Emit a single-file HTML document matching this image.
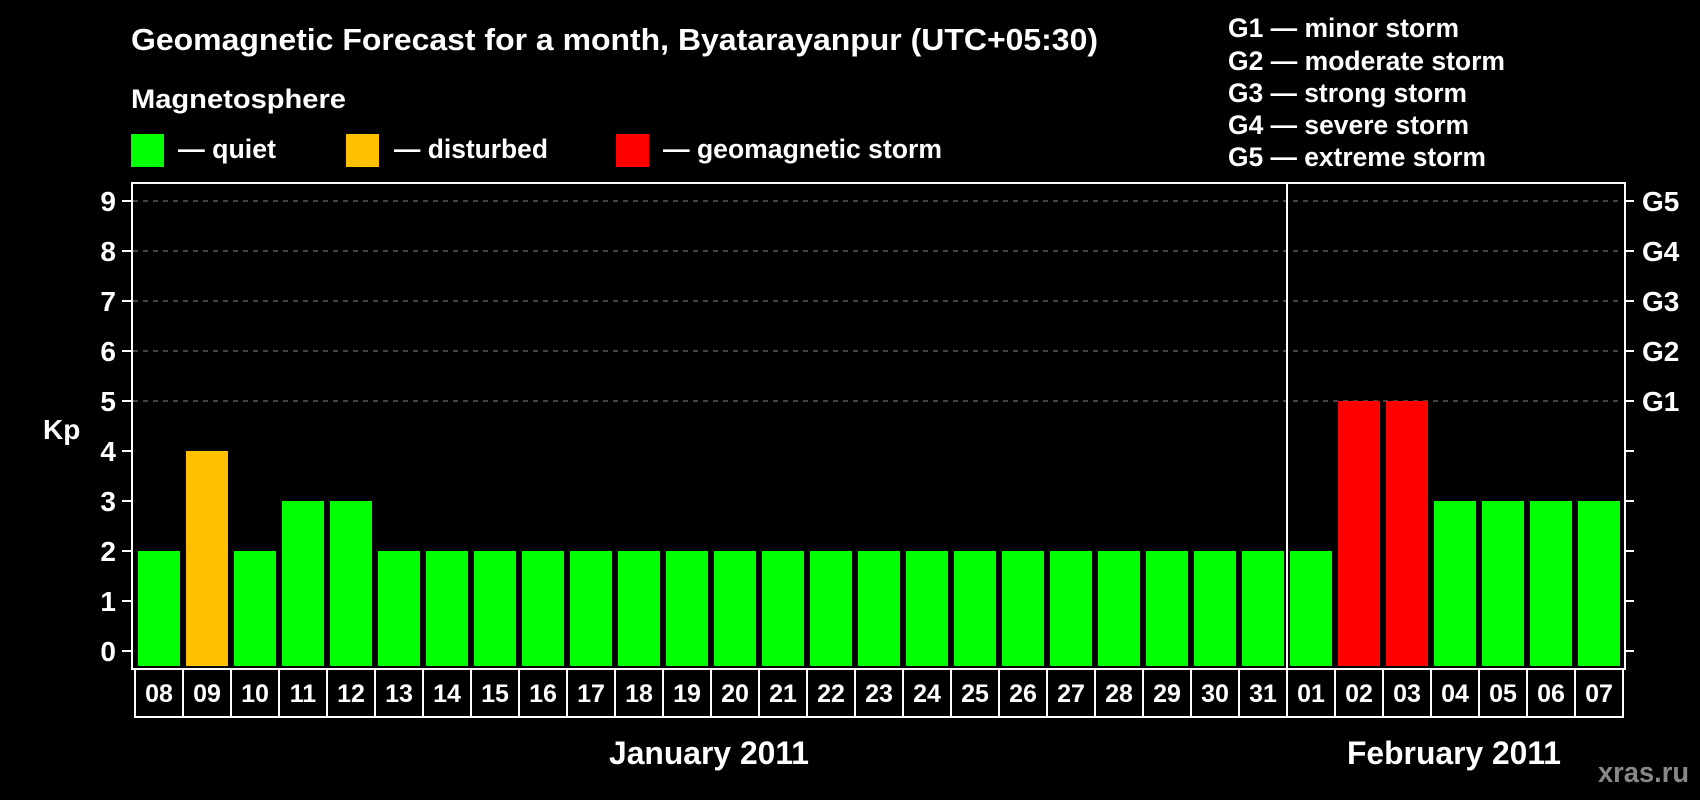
<!DOCTYPE html>
<html><head><meta charset="utf-8"><style>
html,body{margin:0;padding:0;background:#000;}
svg{display:block;}
text{font-family:"Liberation Sans",sans-serif;font-weight:bold;fill:#fff;}
</style></head><body>
<svg width="1700" height="800" xmlns="http://www.w3.org/2000/svg">
<rect width="1700" height="800" fill="#000"/>
<text x="131" y="50" font-size="31" textLength="967" lengthAdjust="spacingAndGlyphs">Geomagnetic Forecast for a month, Byatarayanpur (UTC+05:30)</text>
<text x="131" y="108" font-size="27" textLength="215" lengthAdjust="spacingAndGlyphs">Magnetosphere</text>
<rect x="131" y="134" width="33" height="33" fill="#00ff00"/>
<text x="178" y="158" font-size="27" textLength="98" lengthAdjust="spacingAndGlyphs">— quiet</text>
<rect x="346" y="134" width="33" height="33" fill="#ffc000"/>
<text x="394" y="158" font-size="27" textLength="154" lengthAdjust="spacingAndGlyphs">— disturbed</text>
<rect x="616" y="134" width="33" height="33" fill="#ff0000"/>
<text x="663" y="158" font-size="27" textLength="279" lengthAdjust="spacingAndGlyphs">— geomagnetic storm</text>
<g font-size="27">
<text x="1228" y="37" textLength="231" lengthAdjust="spacingAndGlyphs">G1 — minor storm</text>
<text x="1228" y="70" textLength="277" lengthAdjust="spacingAndGlyphs">G2 — moderate storm</text>
<text x="1228" y="102" textLength="239" lengthAdjust="spacingAndGlyphs">G3 — strong storm</text>
<text x="1228" y="134" textLength="241" lengthAdjust="spacingAndGlyphs">G4 — severe storm</text>
<text x="1228" y="166" textLength="258" lengthAdjust="spacingAndGlyphs">G5 — extreme storm</text>
</g>
<g stroke="#888" stroke-width="1" stroke-dasharray="5,5">
<line x1="133" x2="1623" y1="201" y2="201"/><line x1="133" x2="1623" y1="251" y2="251"/>
<line x1="133" x2="1623" y1="301" y2="301"/><line x1="133" x2="1623" y1="351" y2="351"/>
<line x1="133" x2="1623" y1="401" y2="401"/>
</g>
<g stroke="#fff" stroke-width="2">
<line x1="122" x2="131" y1="201" y2="201"/><line x1="122" x2="131" y1="251" y2="251"/>
<line x1="122" x2="131" y1="301" y2="301"/><line x1="122" x2="131" y1="351" y2="351"/>
<line x1="122" x2="131" y1="401" y2="401"/><line x1="122" x2="131" y1="451" y2="451"/>
<line x1="122" x2="131" y1="501" y2="501"/><line x1="122" x2="131" y1="551" y2="551"/>
<line x1="122" x2="131" y1="601" y2="601"/><line x1="122" x2="131" y1="651" y2="651"/>
<line x1="1625" x2="1634" y1="201" y2="201"/><line x1="1625" x2="1634" y1="251" y2="251"/>
<line x1="1625" x2="1634" y1="301" y2="301"/><line x1="1625" x2="1634" y1="351" y2="351"/>
<line x1="1625" x2="1634" y1="401" y2="401"/><line x1="1625" x2="1634" y1="451" y2="451"/>
<line x1="1625" x2="1634" y1="501" y2="501"/><line x1="1625" x2="1634" y1="551" y2="551"/>
<line x1="1625" x2="1634" y1="601" y2="601"/><line x1="1625" x2="1634" y1="651" y2="651"/>
</g>
<g font-size="28" text-anchor="end">
<text x="116" y="211">9</text><text x="116" y="261">8</text><text x="116" y="311">7</text>
<text x="116" y="361">6</text><text x="116" y="411">5</text><text x="116" y="461">4</text>
<text x="116" y="511">3</text><text x="116" y="561">2</text><text x="116" y="611">1</text>
<text x="116" y="661">0</text>
</g>
<text x="43" y="439" font-size="28">Kp</text>
<g font-size="28">
<text x="1642" y="211">G5</text><text x="1642" y="261">G4</text><text x="1642" y="311">G3</text>
<text x="1642" y="361">G2</text><text x="1642" y="411">G1</text>
</g>
<g id="bars"></g>
<rect x="132" y="183" width="1493" height="486" fill="none" stroke="#fff" stroke-width="2"/>
<line x1="1287" x2="1287" y1="183" y2="669" stroke="#fff" stroke-width="2"/>
<g id="labels" font-size="25" text-anchor="middle"></g>
<text x="709" y="764" font-size="32" text-anchor="middle" textLength="200" lengthAdjust="spacingAndGlyphs">January 2011</text>
<text x="1454" y="764" font-size="32" text-anchor="middle" textLength="214" lengthAdjust="spacingAndGlyphs">February 2011</text>
<text x="1689" y="782" font-size="29" text-anchor="end" style="fill:#888" textLength="91" lengthAdjust="spacingAndGlyphs">xras.ru</text>
<script>
var v=[2,4,2,3,3,2,2,2,2,2,2,2,2,2,2,2,2,2,2,2,2,2,2,2,2,5,5,3,3,3,3];
var d=["08","09","10","11","12","13","14","15","16","17","18","19","20","21","22","23","24","25","26","27","28","29","30","31","01","02","03","04","05","06","07"];
var ns="http://www.w3.org/2000/svg",b=document.getElementById("bars"),l=document.getElementById("labels");
for(var i=0;i<31;i++){var x=135+48*i;var r=document.createElementNS(ns,"rect");
r.setAttribute("x",x+3);r.setAttribute("width",42);var h=v[i]*50+15;r.setAttribute("y",666-h);r.setAttribute("height",h);
r.setAttribute("fill",v[i]>=5?"#ff0000":v[i]==4?"#ffc000":"#00ff00");b.appendChild(r);
var c=document.createElementNS(ns,"rect");c.setAttribute("x",x);c.setAttribute("y",669);c.setAttribute("width",48);c.setAttribute("height",48);
c.setAttribute("fill","none");c.setAttribute("stroke","#fff");c.setAttribute("stroke-width","2");l.appendChild(c);
var t=document.createElementNS(ns,"text");t.setAttribute("x",x+24);t.setAttribute("y",702);t.textContent=d[i];l.appendChild(t);}
</script>
</svg>
</body></html>
